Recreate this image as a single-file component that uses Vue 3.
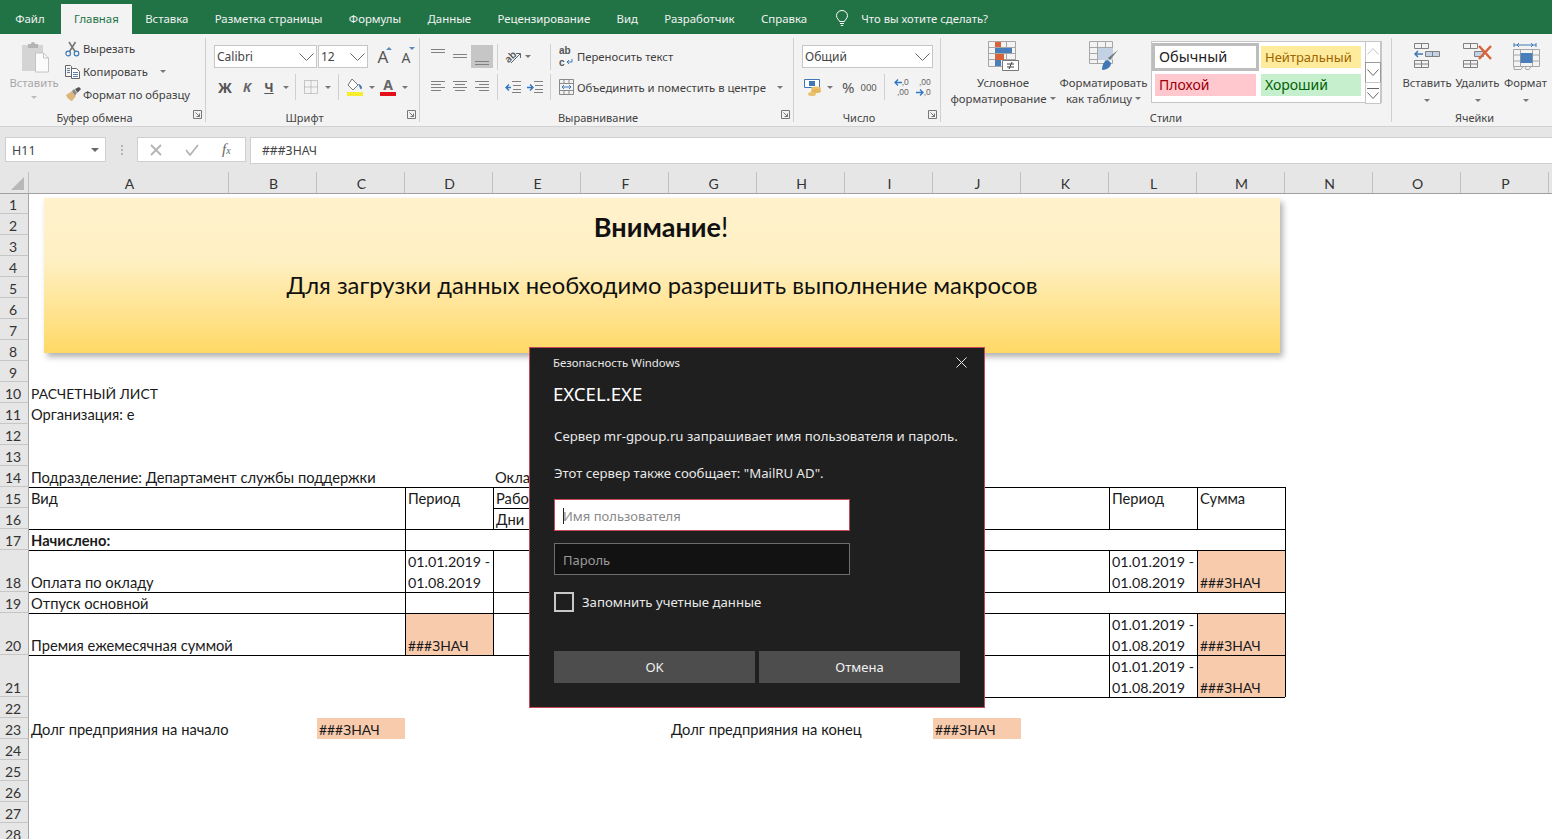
<template>
  <div class="page">
    <!-- вкладки -->
    <div class="tabs">
      <div v-for="t in tabs" :key="t" :class="['tab', { active: t === 'Главная' }]">{{ t }}</div>
      <svg class="bulb" width="14" height="17" viewBox="0 0 14 17" fill="none" stroke="#fff" stroke-width="1">
        <path d="M4.500 11.500C4.300 9.800 1.500 8.600 1.500 5.700a5.500 5.200 0 0 1 11 0c0 2.900-2.800 4.100-3 5.800zM5 13.500h4M5.800 15.500h2.400" />
      </svg>
      <div class="tell">Что вы хотите сделать?</div>
    </div>

    <!-- лента -->
    <div class="ribbon">
      <section class="group g-clip">
        <div class="body">
          <div class="paste">
            <svg width="30" height="32" viewBox="0 0 30 32">
              <path d="M1 4h21v26H1z" fill="#d4d4d4" />
              <path d="M7 3h3a2 2 0 0 1 4 0h3v4H7z" fill="#b4b4b4" />
              <path d="M14.500 12h8l5 5v14h-13z" fill="#fbfbfb" stroke="#c4c4c4" />
              <path d="M22.500 12v5h5" fill="none" stroke="#c4c4c4" />
            </svg>
            <span class="paste-label">Вставить</span>
            <i class="caret light"></i>
          </div>
          <div class="clip-list">
            <div class="small-btn">
              <svg width="15" height="16" viewBox="0 0 15 16" fill="none">
                <path d="M4.500 10.500 10.500 1M10 10.500 4 1" stroke="#777" stroke-width="1.600" />
                <circle cx="3.200" cy="12.500" r="2.300" stroke="#3f78b5" stroke-width="1.200" />
                <circle cx="11.500" cy="12.500" r="2.300" stroke="#3f78b5" stroke-width="1.200" />
              </svg>
              <span>Вырезать</span>
            </div>
            <div class="small-btn">
              <svg width="15" height="14" viewBox="0 0 15 14" fill="none" stroke="#666">
                <path d="M.5.500h5l1 1v10h-6z" fill="#f6f6f6" />
                <path d="M6.500 3.500h5l3 3v7h-8z" fill="#fff" />
                <path d="M2 3.500h3M2 5.500h3M2 7.500h3M8 7.500h5M8 9.500h5M8 11.500h5" stroke="#5c7fa6" />
              </svg>
              <span>Копировать</span>
              <i class="caret copy-caret"></i>
            </div>
            <div class="small-btn">
              <svg width="17" height="16" viewBox="0 0 17 16">
                <path d="M1 8 7 4l4 5-4 5C5 13.700 2 11 1 8z" fill="#dcb67a" />
                <path d="m7 4 2-2 3 4-2 2.500z" fill="#888" />
                <path d="m10 2 4-2 2 2-3.500 3.800z" fill="#555" />
              </svg>
              <span class="painter">Формат по образцу</span>
            </div>
          </div>
        </div>
        <div class="label">Буфер обмена</div>
        <svg class="launch" width="9" height="9" viewBox="0 0 9 9" fill="none" stroke="#777"><path d="M.5 8.500v-8h8v8z" /><path d="m2.500 2.500 4 4M3.500 6.500h3v-3" /></svg>
      </section>

      <section class="group g-font">
        <div class="body col">
          <div class="line">
            <div class="combo c-font"><span>Calibri</span><svg width="15" height="8" viewBox="0 0 15 8" fill="none" stroke="#666"><path d="m.5.500 7 7 7-7" /></svg></div>
            <div class="combo c-size"><span>12</span><svg width="15" height="8" viewBox="0 0 15 8" fill="none" stroke="#666"><path d="m.5.500 7 7 7-7" /></svg></div>
            <div class="grow-btn big-a"><span>A</span><i class="tri up"></i></div>
            <div class="grow-btn small-a"><span>A</span><i class="tri down"></i></div>
          </div>
          <div class="line second">
            <div class="ic t-bold">Ж</div>
            <div class="ic t-ital">К</div>
            <div class="ic t-under">Ч</div>
            <div class="cr"><i class="caret"></i></div>
            <i class="sep s4"></i>
            <div class="ic">
              <svg width="14" height="14" viewBox="0 0 14 14" fill="none" stroke="#9a9a9a" stroke-dasharray="1 1"><path d="M.5.500h13v13H.5zM7 .5v13M.5 7h13" /></svg>
            </div>
            <div class="cr"><i class="caret"></i></div>
            <i class="sep s5"></i>
            <div class="ic">
              <svg width="18" height="19" viewBox="0 0 18 19">
                <path d="m6 1 6 6-5 5-5-5z" fill="#fff" stroke="#777" />
                <path d="M12 6c2 0 4 2 4 4 0 1-1 1.500-1.500 1-.8-1-1-3-2.500-5z" fill="#3f78b5" />
                <path d="M1 14h16v4H1z" fill="#f6ee2c" />
              </svg>
            </div>
            <div class="cr"><i class="caret"></i></div>
            <div class="ic font-a"><span>A</span><i class="red-bar"></i></div>
            <div class="cr"><i class="caret"></i></div>
          </div>
        </div>
        <div class="label">Шрифт</div>
        <svg class="launch" width="9" height="9" viewBox="0 0 9 9" fill="none" stroke="#777"><path d="M.5 8.500v-8h8v8z" /><path d="m2.500 2.500 4 4M3.500 6.500h3v-3" /></svg>
      </section>

      <section class="group g-align">
        <div class="body col">
          <div class="line">
            <div class="ic al"><svg width="22" height="23" fill="none" stroke="#808080"><path d="M4 4.500h14M4 7.500h14" /></svg></div>
            <div class="ic al"><svg width="22" height="23" fill="none" stroke="#808080"><path d="M4 9.500h14M4 12.500h14" /></svg></div>
            <div class="ic al on"><svg width="22" height="23" fill="none" stroke="#808080"><path d="M4 16.500h14M4 19.500h14" /></svg></div>
            <i class="sep s-al"></i>
            <div class="orient">
              <div class="orient-ic">
                <span>ab</span>
                <svg width="17" height="17" viewBox="0 0 17 17" fill="none" stroke="#666"><path d="m6 15 9-9M11 5.500h4.500V10" /></svg>
              </div>
              <i class="caret"></i>
            </div>
            <i class="sep"></i>
            <div class="small-btn wrap-btn">
              <div class="wrap-ic">
                <span>ab</span>
                <div class="wrap-low">
                  <span>c</span>
                  <svg width="7" height="6" viewBox="0 0 7 6" fill="none" stroke="#3f78b5"><path d="M6 0v3H1M3 1 1 3l2 2" /></svg>
                </div>
              </div>
              <span>Переносить текст</span>
            </div>
          </div>
          <div class="line second">
            <div class="ic al"><svg width="22" height="24" fill="none" stroke="#808080"><path d="M4 6.500h14M4 9.500h10M4 12.500h14M4 15.500h10" /></svg></div>
            <div class="ic al"><svg width="22" height="24" fill="none" stroke="#808080"><path d="M4 6.500h14M6 9.500h10M4 12.500h14M6 15.500h10" /></svg></div>
            <div class="ic al"><svg width="22" height="24" fill="none" stroke="#808080"><path d="M4 6.500h14M8 9.500h10M4 12.500h14M8 15.500h10" /></svg></div>
            <i class="sep s-al"></i>
            <div class="indent">
              <svg width="16" height="14" viewBox="0 0 16 14" fill="none"><path d="M7 1.500h9M8 5.500h8M8 9.500h8M7 12.500h9" stroke="#808080" /><path d="M6 7.500H1M4 4.500l-3 3 3 3" stroke="#2f77c0" stroke-width="1.400" /></svg>
              <svg width="16" height="14" viewBox="0 0 16 14" fill="none"><path d="M7 1.500h9M8 5.500h8M8 9.500h8M7 12.500h9" stroke="#808080" /><path d="M0 7.500h5M3 4.500l3 3-3 3" stroke="#2f77c0" stroke-width="1.400" /></svg>
            </div>
            <i class="sep"></i>
            <div class="small-btn wrap-btn">
              <svg width="15" height="16" viewBox="0 0 15 16" fill="none"><path d="M.5.500h14v15H.5zM.5 4.500h14M.5 11.500h14M5 .5v4M10 .5v4M5 11.500v4M10 11.500v4" stroke="#8a8a8a" /><path d="M3 8h9M5 6 3 8l2 2M10 6l2 2-2 2" stroke="#3f78b5" /></svg>
              <span>Объединить и поместить в центре</span>
              <i class="caret merge-caret"></i>
            </div>
          </div>
        </div>
        <div class="label">Выравнивание</div>
        <svg class="launch" width="9" height="9" viewBox="0 0 9 9" fill="none" stroke="#777"><path d="M.5 8.500v-8h8v8z" /><path d="m2.500 2.500 4 4M3.500 6.500h3v-3" /></svg>
      </section>

      <section class="group g-num">
        <div class="body col">
          <div class="line">
            <div class="combo c-num"><span>Общий</span><svg width="15" height="8" viewBox="0 0 15 8" fill="none" stroke="#666"><path d="m.5.500 7 7 7-7" /></svg></div>
          </div>
          <div class="line second">
            <svg class="money" width="18" height="17" viewBox="0 0 18 17">
              <path d="M.5.500h15v8H.5z" fill="#fff" stroke="#3f78b5" />
              <path d="M5 2h6v5H5z" fill="#3f78b5" />
              <ellipse cx="12" cy="9.500" rx="5" ry="2" fill="#eac16f" />
              <ellipse cx="12" cy="12" rx="5" ry="2" fill="#e6b65c" />
              <ellipse cx="8" cy="15" rx="4" ry="2" fill="#eac16f" />
            </svg>
            <div class="cr num-cr"><i class="caret"></i></div>
            <span class="percent">%</span>
            <span class="thousand">000</span>
            <i class="sep s-num"></i>
            <div class="dec">
              <div class="dec-row">
                <svg width="8" height="7" viewBox="0 0 8 7" fill="none" stroke="#2f77c0" stroke-width="1.300"><path d="M8 3.500H1M4 .5l-3 3 3 3" /></svg>
                <span>,0</span>
              </div>
              <div class="dec-row"><span>,00</span></div>
            </div>
            <div class="dec dec-2">
              <div class="dec-row"><span>,00</span></div>
              <div class="dec-row">
                <svg width="8" height="7" viewBox="0 0 8 7" fill="none" stroke="#2f77c0" stroke-width="1.300"><path d="M0 3.500h7M4 .5l3 3-3 3" /></svg>
                <span>,0</span>
              </div>
            </div>
          </div>
        </div>
        <div class="label">Число</div>
        <svg class="launch" width="9" height="9" viewBox="0 0 9 9" fill="none" stroke="#777"><path d="M.5 8.500v-8h8v8z" /><path d="m2.500 2.500 4 4M3.500 6.500h3v-3" /></svg>
      </section>

      <section class="group g-styles">
        <div class="body">
          <div class="big-btn cond">
            <svg width="31" height="30" viewBox="0 0 31 30" fill="none">
              <path d="M.5.500h27v25H.5zM9.500.5v25M18.500.5v25M.5 6.500h27M.5 12.500h27M.5 18.500h27" stroke="#a6a6a6" />
              <path d="M7 1h6v5H7zM7 13h9v6H7z" fill="#d9623b" />
              <path d="M7 7h17v5H7zM7 19h6v6H7z" fill="#4a7ebb" />
              <path d="M14.500 19.500h16v10h-16z" fill="#fff" stroke="#777" />
              <path d="M19 23h7M19 26h7M24 21l-3 7" stroke="#444" />
            </svg>
            <span class="big-label">Условное</span>
            <span class="big-label">форматирование<i class="caret inl"></i></span>
          </div>
          <div class="big-btn tbl">
            <svg width="30" height="30" viewBox="0 0 30 30" fill="none">
              <path d="M.5.500h23v22H.5zM8.500.5v22M16.500.5v22M.5 6.500h23M.5 12.500h23M.5 18.500h23" stroke="#a6a6a6" />
              <path d="M9 7h15v12H9z" fill="#c3d1e4" />
              <path d="m29 9-8 10-2-2z" fill="#777" />
              <path d="M13 29c0-6 3-10 6-10l3 3c0 4-4 7-9 7z" fill="#3f78b5" />
            </svg>
            <span class="big-label">Форматировать</span>
            <span class="big-label">как таблицу<i class="caret inl"></i></span>
          </div>
          <div class="gallery">
            <div class="gal-grid">
              <div class="st st-normal">Обычный</div>
              <div class="st st-neutral">Нейтральный</div>
              <div class="st st-bad">Плохой</div>
              <div class="st st-good">Хороший</div>
            </div>
            <div class="gal-scroll">
              <div class="gs gs-up"><svg width="12" height="7" viewBox="0 0 12 7" fill="none" stroke="#c4c4c4"><path d="m.5 6.500 5.500-6 5.500 6" /></svg></div>
              <div class="gs gs-down"><svg width="12" height="7" viewBox="0 0 12 7" fill="none" stroke="#666"><path d="m.5.500 5.500 6 5.500-6" /></svg></div>
              <div class="gs gs-more"><i class="more-line"></i><svg width="12" height="7" viewBox="0 0 12 7" fill="none" stroke="#666"><path d="m.5.500 5.500 6 5.500-6" /></svg></div>
            </div>
          </div>
        </div>
        <div class="label no-launch">Стили</div>
      </section>

      <section class="group g-cells">
        <div class="body">
          <div class="cell-btn">
            <svg width="28" height="27" viewBox="0 0 28 27" fill="none" stroke="#808080">
              <path d="M1.500 1.500h14v5h-14zM8.500 1.500v5M1.500 18.500h14v7h-14zM8.500 18.500v7M1.500 22h14" />
              <path d="M12.500 9.500h14v5h-14zM19.500 9.500v5" fill="#c3d1e4" />
              <path d="M10 12H2M5 9l-3 3 3 3" stroke="#3f78b5" stroke-width="1.500" />
            </svg>
            <span>Вставить</span>
            <i class="caret"></i>
          </div>
          <div class="cell-btn">
            <svg width="31" height="27" viewBox="0 0 31 27" fill="none" stroke="#808080">
              <path d="M1.500 1.500h14v5h-14zM8.500 1.500v5M1.500 18.500h14v7h-14zM8.500 18.500v7M1.500 22h14" />
              <path d="M12.500 9.500h9v5h-9z" fill="#c3d1e4" />
              <path d="m17 4 12 13M29 4 17 17" stroke="#d9623b" stroke-width="2.500" />
            </svg>
            <span>Удалить</span>
            <i class="caret"></i>
          </div>
          <div class="cell-btn last">
            <svg width="28" height="28" viewBox="0 0 28 28" fill="none">
              <path d="M1 3h22M1 1v4M23 1v4M4 3l2-2M4 3l2 2M20 3l-2-2M20 3l-2 2" stroke="#3f78b5" transform="translate(1 0)" />
              <path d="M1.500 7.500h26v17h-26zM8.500 7.500v17M20.500 7.500v17M1.500 13h26M1.500 19h26" stroke="#a6a6a6" />
              <path d="M8.500 11h12v10h-12z" fill="#4a7ebb" />
              <path d="M2 24.500v3h7l2-3M13 24.500l1 3h3l2-3" stroke="#a6a6a6" />
            </svg>
            <span>Формат</span>
            <i class="caret"></i>
          </div>
        </div>
        <div class="label no-launch">Ячейки</div>
      </section>
    </div>

    <!-- строка формул -->
    <div class="formula">
      <div class="name-box"><span>H11</span><i class="caret dark"></i></div>
      <div class="dots"><i></i><i></i><i></i></div>
      <div class="fx-box">
        <svg width="12" height="12" viewBox="0 0 12 12" fill="none" stroke="#b4b4b4" stroke-width="1.800"><path d="m1 1 10 10M11 1 1 11" /></svg>
        <svg width="14" height="12" viewBox="0 0 14 12" fill="none" stroke="#b4b4b4" stroke-width="1.800"><path d="m1 6 4 5 8-10" /></svg>
        <span class="fx">f<small>x</small></span>
      </div>
      <div class="formula-input">###ЗНАЧ</div>
    </div>

    <!-- лист -->
    <div class="sheet">
      <div class="col-head">
        <div class="corner"><i></i></div>
        <div v-for="c in cols" :key="c" :class="['head-cell', { wide: c === 'A' }]">{{ c }}</div>
      </div>
      <div v-for="row in rows" :key="row.n" class="row" :style="{ height: row.h + 'px' }">
        <div class="row-num">{{ row.n }}</div>
        <div
          v-for="cell in row.cells"
          :key="cell.id"
          :class="['cell', { wide: cell.col === 'A', top: cell.top, left: cell.left, fill: cell.fill, bold: cell.bold, caps: cell.caps, dates: cell.dates }]"
        >
          <span v-if="cell.text" class="txt">{{ cell.text }}</span>
        </div>
      </div>
    </div>

    <!-- плашка про макросы -->
    <div class="banner">
      <div class="banner-head"><b>Внимание</b>!</div>
      <div class="banner-text">Для загрузки данных необходимо разрешить выполнение макросов</div>
    </div>

    <!-- диалог -->
    <div class="dialog">
      <div class="dlg-title">
        <span>Безопасность Windows</span>
        <svg width="11" height="11" viewBox="0 0 11 11" fill="none" stroke="#e8e8e8"><path d="m.5.500 10 10M10.500.5l-10 10" /></svg>
      </div>
      <div class="dlg-app">EXCEL.EXE</div>
      <div class="dlg-msg first">Сервер mr-gpoup.ru запрашивает имя пользователя и пароль.</div>
      <div class="dlg-msg second">Этот сервер также сообщает: "MailRU AD".</div>
      <div class="dlg-input focus"><i class="cursor"></i>Имя пользователя</div>
      <div class="dlg-input dark-in">Пароль</div>
      <div class="dlg-check"><i class="box"></i><span>Запомнить учетные данные</span></div>
      <div class="dlg-btns">
        <div class="dlg-btn">OK</div>
        <div class="dlg-btn">Отмена</div>
      </div>
    </div>
  </div>
</template>

<script setup>
const tabs = ['Файл', 'Главная', 'Вставка', 'Разметка страницы', 'Формулы', 'Данные', 'Рецензирование', 'Вид', 'Разработчик', 'Справка']
const cols = 'ABCDEFGHIJKLMNOP'.split('')

const dates = '01.01.2019 -\n01.08.2019'
const err = '###ЗНАЧ'

// содержимое ячеек
const texts = {
  A10: 'РАСЧЕТНЫЙ ЛИСТ',
  A11: 'Организация: е',
  A14: 'Подразделение: Департамент службы поддержки',
  E14: 'Оклад',
  A15: 'Вид',
  D15: 'Период',
  E15: 'Рабочие',
  L15: 'Период',
  M15: 'Сумма',
  E16: 'Дни',
  A17: 'Начислено:',
  A18: 'Оплата по окладу',
  D18: dates,
  L18: dates,
  M18: err,
  A19: 'Отпуск основной',
  A20: 'Премия ежемесячная суммой',
  D20: err,
  L20: dates,
  M20: err,
  L21: dates,
  M21: err,
  A23: 'Долг предприяния на начало',
  C23: err,
  G23: 'Долг предприяния на конец',
  J23: err
}

const fills = ['D20', 'M18', 'M20', 'M21', 'C23', 'J23']
const tall = [18, 20, 21]

const hasTop = (c, r) => {
  if (r === 16) return 'EFGH'.includes(c)
  if (r === 22) return 'JKLM'.includes(c)
  return r >= 15 && r <= 21 && c <= 'M'
}

const hasLeft = (c, r) => {
  if (c === 'D') return r >= 15 && r <= 20
  if (c === 'E') return [15, 16, 18, 19, 20].includes(r)
  if (c === 'L' || c === 'M') return [15, 16, 18, 20, 21].includes(r)
  if (c === 'N') return r >= 15 && r <= 21
  return false
}

const rows = []
for (let r = 1; r <= 28; r++) {
  rows.push({
    n: r,
    h: r === 1 ? 20 : tall.includes(r) ? 42 : 21,
    cells: cols.map((c) => ({
      id: c + r,
      col: c,
      text: texts[c + r] || '',
      top: hasTop(c, r),
      left: hasLeft(c, r),
      fill: fills.includes(c + r),
      bold: c + r === 'A17',
      caps: texts[c + r] === err || c + r === 'A10',
      dates: texts[c + r] === dates
    }))
  })
}
</script>

<style scoped>
.page {
  position: relative;
  width: 1552px;
  height: 839px;
  overflow: hidden;
  background: #fff;
  font-family: "Noto Sans", "Open Sans", sans-serif;
  color: #444;
}

/* вкладки */
.tabs {
  display: flex;
  height: 34px;
  background: #217346;
  padding-left: 2px;
}
.tab {
  height: 30px;
  margin-top: 4px;
  padding: 0 13.200px;
  line-height: 29px;
  font-size: 11.400px;
  color: #f2f2f2;
  white-space: nowrap;
}
.tab:first-child {
  margin-right: 3px;
}
.tab.active {
  background: #f3f3f3;
  color: #217346;
}
.bulb {
  margin: 10px 0 0 15px;
}
.tell {
  margin: 4px 0 0 12px;
  line-height: 29px;
  font-size: 11.300px;
  color: #f2f2f2;
}

/* лента */
.ribbon {
  display: flex;
  height: 93px;
  padding: 4px 0;
  box-sizing: border-box;
  background: #f3f3f3;
  border-bottom: 1px solid #d2d2d2;
}
.group {
  position: relative;
  display: flex;
  flex-direction: column;
  flex-shrink: 0;
  height: 84px;
  box-sizing: border-box;
  border-right: 1px solid #d0d0d0;
}
.g-clip { width: 206px; padding-left: 8px; }
.g-font { width: 214px; padding-left: 8px; }
.g-align { width: 374px; padding-left: 7px; }
.g-num { width: 147px; padding-left: 8px; }
.g-styles { width: 451px; padding-left: 5px; }
.g-cells { width: 160px; padding-left: 11px; border-right: 0; }
.body {
  display: flex;
  flex-shrink: 0;
  height: 72px;
}
.body.col {
  flex-direction: column;
  padding-top: 7px;
  box-sizing: border-box;
}
.label {
  flex-shrink: 0;
  padding-right: 16px;
  text-align: center;
  font-size: 11px;
  line-height: 16px;
  margin-left: -8px;
}
.label.no-launch {
  padding-right: 0;
}
.g-styles .label { margin-left: -5px; }
.g-cells .label { margin-left: -6px; }
.launch {
  position: absolute;
  right: 3px;
  bottom: 3px;
}
.caret {
  display: inline-block;
  width: 0;
  height: 0;
  flex-shrink: 0;
  border-left: 3px solid transparent;
  border-right: 3px solid transparent;
  border-top: 3px solid #777;
}
.caret.light { border-top-color: #bbb; }
.caret.dark { border-left-width: 4px; border-right-width: 4px; border-top-width: 4px; border-top-color: #666; }
.caret.inl { margin: 0 0 2px 3px; vertical-align: middle; }
.line {
  display: flex;
  align-items: center;
  height: 23px;
}
.line.second {
  margin-top: 7px;
  height: 24px;
}
.ic {
  display: flex;
  align-items: center;
  justify-content: center;
  width: 22px;
  height: 23px;
  flex-shrink: 0;
}
.ic.al { height: auto; align-self: stretch; }
.ic.on { background: #c6c6c6; }
.cr {
  display: flex;
  align-items: center;
  justify-content: center;
  width: 11px;
  flex-shrink: 0;
}
.sep {
  display: block;
  width: 1px;
  height: 26px;
  background: #d0d0d0;
  flex-shrink: 0;
}
.s4 { margin: 0 4px; }
.s5 { margin: 0 5px; }
.s-al { margin-left: 4px; }
.s-num { margin: 0 8px 0 7px; }

/* буфер обмена */
.paste {
  display: flex;
  flex-direction: column;
  align-items: center;
  width: 52px;
  padding-top: 3px;
  box-sizing: border-box;
}
.paste svg { margin-left: 4px; }
.paste-label {
  margin-top: 2px;
  font-size: 11.300px;
  line-height: 16px;
  color: #a8a8a8;
}
.paste .caret { margin-top: 5px; }
.clip-list {
  margin: -1px 0 0 5px;
  display: flex;
  flex-direction: column;
}
.small-btn {
  display: flex;
  align-items: center;
  gap: 3px;
  height: 23px;
  font-size: 11.300px;
  white-space: nowrap;
  color: #3f3f3f;
}
.small-btn svg { flex-shrink: 0; }
.copy-caret { margin-left: 9px; }
.painter { margin-left: -2px; }

/* шрифт */
.combo {
  display: flex;
  align-items: center;
  justify-content: space-between;
  height: 23px;
  padding: 0 2px;
  box-sizing: border-box;
  background: #fff;
  border: 1px solid #c6c6c6;
  font-size: 12px;
  flex-shrink: 0;
}
.c-font { width: 103px; }
.c-size { width: 50px; margin-left: 1px; }
.c-num { width: 131px; }
.grow-btn {
  position: relative;
  display: flex;
  align-items: flex-end;
  justify-content: center;
  height: 23px;
  color: #555;
}
.big-a { width: 16px; margin-left: 7px; font-size: 17px; line-height: 22px; }
.small-a { width: 16px; margin-left: 7px; font-size: 14px; line-height: 21px; }
.tri {
  position: absolute;
  top: 2px;
  right: -1px;
  width: 0;
  height: 0;
  border-left: 3px solid transparent;
  border-right: 3px solid transparent;
}
.tri.up { border-bottom: 3px solid #5b8cc0; }
.tri.down { border-top: 3px solid #5b8cc0; }
.t-bold { font-weight: 700; font-size: 14px; color: #555; }
.t-ital { font-weight: 700; font-style: italic; font-size: 13px; color: #666; }
.t-under { font-weight: 700; font-size: 13px; color: #555; text-decoration: underline; }
.font-a {
  flex-direction: column;
  font-size: 14px;
  font-weight: 700;
  line-height: 14px;
  color: #666;
}
.red-bar {
  display: block;
  width: 16px;
  height: 4px;
  background: #e3101a;
}

/* выравнивание */
.orient {
  display: flex;
  align-items: center;
  gap: 3px;
  width: 52px;
  padding-left: 7px;
  box-sizing: border-box;
}
.orient-ic {
  display: grid;
  width: 17px;
  height: 17px;
}
.orient-ic > * { grid-area: 1 / 1; }
.orient-ic span {
  font-size: 10px;
  font-weight: 600;
  line-height: 12px;
  color: #555;
  transform: rotate(-45deg);
}
.wrap-btn { margin-left: 8px; }
.wrap-ic {
  width: 15px;
  display: flex;
  flex-direction: column;
  font-family: "Liberation Sans", sans-serif;
  font-size: 10px;
  font-weight: 700;
  line-height: 11.500px;
  color: #555;
}
.wrap-low {
  display: flex;
  align-items: center;
  gap: 1px;
}
.indent {
  display: flex;
  gap: 6px;
  width: 52px;
  padding-left: 7px;
  box-sizing: border-box;
}
.merge-caret { margin-left: 8px; }

/* число */
.money { margin-left: 2px; }
.num-cr { margin: 0 0 0 2px; }
.percent { margin-left: 7px; font-size: 15px; color: #555; }
.thousand { margin-left: 6px; font-size: 9.500px; color: #555; }
.dec {
  display: flex;
  flex-direction: column;
  width: 16px;
  font-family: "Liberation Sans", sans-serif;
  font-size: 8.500px;
  line-height: 10px;
  color: #666;
}
.dec-row {
  display: flex;
  align-items: center;
  justify-content: flex-end;
}
.dec-2 { margin-left: 6px; }

/* стили */
.big-btn {
  display: flex;
  flex-direction: column;
  align-items: center;
  padding-top: 3px;
  box-sizing: border-box;
}
.cond { width: 114px; }
.tbl { width: 87px; }
.big-btn svg { margin-bottom: 4px; }
.big-label {
  font-size: 11.400px;
  line-height: 16px;
  white-space: nowrap;
}
.gallery {
  display: flex;
  width: 231px;
  height: 62px;
  margin: 3px 0 0 4px;
  box-sizing: border-box;
  background: #fff;
  border: 1px solid #c6c6c6;
}
.gal-grid {
  display: grid;
  grid-template-columns: 107px 100px;
  grid-template-rows: 31px 29px;
  column-gap: 2px;
  width: 213px;
}
.st {
  display: flex;
  align-items: center;
  padding: 0 0 2px 4px;
  height: 22px;
  box-sizing: border-box;
  font-size: 14px;
}
.st-normal {
  height: 28px;
  margin-top: 1px;
  border: 3px solid #bdbdbd;
  padding-left: 4px;
  color: #222;
  font-size: 14.500px;
}
.st-neutral { margin-top: 4px; padding-bottom: 1px; background: #ffeb9c; color: #9c6500; font-size: 13px; }
.st-bad { background: #ffc7ce; color: #9c0006; margin: 1px 3px 0; }
.st-good { background: #c6efce; color: #006100; margin-top: 1px; }
.gal-scroll {
  width: 16px;
  display: flex;
  flex-direction: column;
  margin-top: -1px;
  margin-bottom: -1px;
}
.gs {
  display: flex;
  flex-direction: column;
  align-items: center;
  justify-content: center;
  flex: 1;
  background: #fff;
  border: 1px solid #c6c6c6;
  margin-bottom: -1px;
}
.gs-down { border-color: #999; }
.more-line {
  display: block;
  width: 12px;
  height: 1px;
  background: #666;
  margin-bottom: 3px;
}

/* ячейки */
.cell-btn {
  display: flex;
  flex-direction: column;
  align-items: center;
  width: 48px;
  margin-right: 3px;
  padding-top: 4px;
  box-sizing: border-box;
  font-size: 11.300px;
  white-space: nowrap;
}
.cell-btn.last { margin-left: -2px; }
.cell-btn span { margin-top: 6px; line-height: 16px; }
.cell-btn .caret { margin-top: 8px; }
.cell-btn:last-child span { margin-top: 5px; }

/* строка формул */
.formula {
  display: flex;
  height: 45px;
  padding-top: 10px;
  box-sizing: border-box;
  background: #e6e6e6;
}
.name-box {
  display: flex;
  align-items: center;
  justify-content: space-between;
  width: 101px;
  height: 25px;
  margin-left: 5px;
  padding: 1px 6px 0;
  box-sizing: border-box;
  background: #fff;
  border: 1px solid #cfcfcf;
  font-size: 12.500px;
}
.dots {
  display: flex;
  flex-direction: column;
  justify-content: center;
  gap: 2px;
  width: 31px;
  height: 25px;
  align-items: center;
}
.dots i {
  display: block;
  width: 2px;
  height: 2px;
  background: #b4b4b4;
}
.fx-box {
  display: flex;
  align-items: center;
  width: 109px;
  height: 25px;
  padding-left: 12px;
  gap: 23px;
  box-sizing: border-box;
  background: #fff;
  border: 1px solid #cfcfcf;
}
.fx {
  font-family: "Liberation Serif", serif;
  font-style: italic;
  font-size: 15px;
  color: #666;
}
.fx small { font-size: 10px; }
.formula-input {
  flex: 1;
  height: 25px;
  margin-left: 4px;
  padding-left: 11px;
  line-height: 25px;
  background: #fff;
  border: 1px solid #cfcfcf;
  border-right: 0;
  font-size: 12.200px;
}

/* лист */
.sheet {
  font-family: "Lato", "Noto Sans", sans-serif;
  font-size: 14.700px;
  color: #1a1a1a;
}
.col-head {
  display: flex;
  height: 22px;
  box-sizing: border-box;
  background: #e6e6e6;
  border-bottom: 1px solid #a0a0a0;
}
.corner {
  position: relative;
  width: 29px;
  box-sizing: border-box;
  flex-shrink: 0;
  border-right: 1px solid #c0c0c0;
}
.corner i {
  position: absolute;
  right: 4px;
  bottom: 3px;
  width: 0;
  height: 0;
  border-left: 13px solid transparent;
  border-bottom: 13px solid #b8b8b8;
}
.head-cell {
  width: 88px;
  flex-shrink: 0;
  box-sizing: border-box;
  padding-left: 2px;
  text-align: center;
  line-height: 23px;
  font-size: 14px;
  color: #333;
  border-right: 1px solid #c0c0c0;
}
.head-cell.wide { width: 200px; }
.row {
  display: flex;
}
.row-num {
  display: flex;
  align-items: flex-end;
  justify-content: center;
  width: 29px;
  flex-shrink: 0;
  box-sizing: border-box;
  padding-right: 2px;
  background: #e6e6e6;
  border-right: 1px solid #a6a6a6;
  border-bottom: 1px solid #c6c6c6;
  font-size: 14px;
  line-height: 16px;
  color: #333;
}
.cell {
  display: flex;
  align-items: flex-end;
  width: 88px;
  flex-shrink: 0;
  box-sizing: border-box;
  padding-left: 2px;
  line-height: 21px;
  white-space: pre;
}
.cell.wide { width: 200px; }
.cell.top { border-top: 1px solid #000; }
.cell.left { border-left: 1px solid #000; }
.cell.fill { background: #f8cbad; }
.cell.bold { font-weight: 700; }
.cell.caps { font-size: 13.900px; }
.cell.dates { font-size: 14.300px; }
.txt { margin-bottom: -1px; }

/* плашка */
.banner {
  position: absolute;
  left: 44px;
  top: 198px;
  width: 1236px;
  height: 155px;
  background: linear-gradient(#fff2cc, #fff0c4 40%, #ffd966);
  box-shadow: 3px 4px 6px rgba(0, 0, 0, 0.3);
  text-align: center;
  font-family: "Lato", "Noto Sans", sans-serif;
  font-size: 23.800px;
  color: #111;
}
.banner-head {
  padding: 14px 2px 0 0;
  line-height: 30px;
  font-size: 27px;
}
.banner-text {
  margin-top: 28px;
  line-height: 30px;
}

/* диалог */
.dialog {
  position: absolute;
  left: 529px;
  top: 347px;
  width: 456px;
  height: 361px;
  box-sizing: border-box;
  padding: 0 23px;
  background: #1f1f1f;
  border: 1px solid #c8485a;
  color: #e8e8e8;
  font-family: "Noto Sans", "Open Sans", sans-serif;
}
.dlg-title {
  display: flex;
  align-items: center;
  justify-content: space-between;
  height: 29px;
  margin-right: -6px;
  font-size: 11.400px;
}
.dlg-app {
  margin-top: 3px;
  font-size: 18.600px;
  line-height: 28px;
  color: #fff;
}
.dlg-msg {
  font-size: 13.200px;
  line-height: 18px;
  padding-left: 1px;
}
.dlg-msg.first { margin-top: 19px; }
.dlg-msg.second { margin-top: 19px; }
.dlg-input {
  position: relative;
  width: 296px;
  height: 32px;
  margin: 0 0 0 1px;
  padding-left: 8px;
  box-sizing: border-box;
  font-size: 13px;
  line-height: 32px;
}
.dlg-input.focus {
  margin-top: 17px;
  background: #fff;
  border: 1px solid #c8485a;
  color: #8a8a8a;
}
.cursor {
  position: absolute;
  left: 8px;
  top: 8px;
  width: 1px;
  height: 16px;
  background: #222;
}
.dlg-input.dark-in {
  margin-top: 12px;
  background: #121212;
  border: 1px solid #6e6e6e;
  color: #9a9a9a;
}
.dlg-check {
  display: flex;
  align-items: center;
  gap: 8px;
  margin: 17px 0 0 1px;
  font-size: 13.200px;
}
.box {
  display: block;
  width: 20px;
  height: 20px;
  box-sizing: border-box;
  border: 2px solid #c8c8c8;
}
.dlg-btns {
  display: flex;
  gap: 4px;
  margin: 39px 0 0 1px;
}
.dlg-btn {
  width: 201px;
  height: 32px;
  background: #4d4d4d;
  text-align: center;
  line-height: 32px;
  font-size: 13px;
  color: #f0f0f0;
}
</style>
